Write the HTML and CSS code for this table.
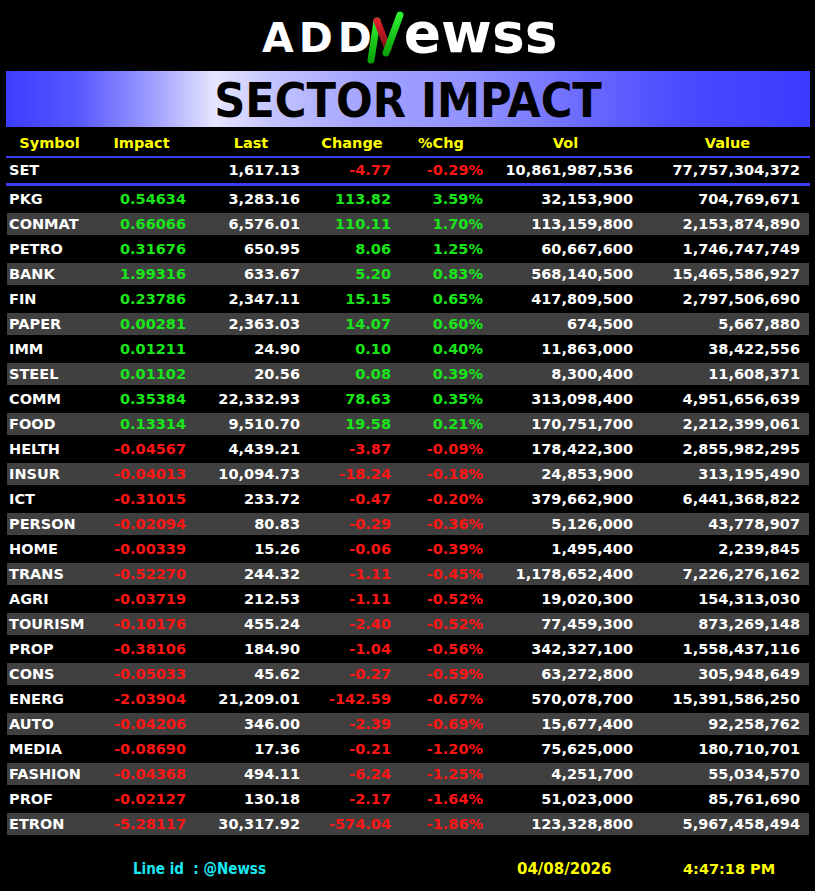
FILE: index.html
```html
<!DOCTYPE html>
<html lang="en">
<head>
<meta charset="utf-8">
<title>SECTOR IMPACT</title>
<link rel="stylesheet" href="styles.css">
</head>
<body>
<div class="page">
  <header class="logo">
    <span class="logo-caps">ADD</span><svg class="logo-n" viewBox="0 0 40 54" width="40" height="54" aria-label="N">
      <defs>
        <linearGradient id="gup" x1="0" y1="1" x2="0" y2="0">
          <stop offset="0" stop-color="#0aa40a"/>
          <stop offset="1" stop-color="#2ef02e"/>
        </linearGradient>
        <linearGradient id="rdn" x1="0" y1="0" x2="0" y2="1">
          <stop offset="0" stop-color="#e0202c"/>
          <stop offset="1" stop-color="#7c1018"/>
        </linearGradient>
      </defs>
      <line x1="6" y1="49" x2="12" y2="10" stroke="url(#gup)" stroke-width="7" stroke-linecap="round"/>
      <line x1="12" y1="10" x2="23" y2="38" stroke="url(#rdn)" stroke-width="7" stroke-linecap="round"/>
      <line x1="21" y1="42" x2="35" y2="4" stroke="url(#gup)" stroke-width="7" stroke-linecap="round"/>
    </svg><span class="logo-lower">ewss</span>
  </header>

  <div class="banner"><h1 class="title">SECTOR IMPACT</h1></div>

  <div class="board">
    <div class="row head">
      <span class="h-sym">Symbol</span><span class="h-imp">Impact</span><span class="h-last">Last</span><span class="h-chg">Change</span><span class="h-pct">%Chg</span><span class="h-vol">Vol</span><span class="h-val">Value</span>
    </div>
    <div class="rule thin"></div>
    <div class="row set">
      <span class="sym">SET</span><span></span><span>1,617.13</span><span class="dn">-4.77</span><span class="dn">-0.29%</span><span>10,861,987,536</span><span>77,757,304,372</span>
    </div>
    <div class="rule thick"></div>

    <div class="row"><span class="sym">PKG</span><span class="up">0.54634</span><span>3,283.16</span><span class="up">113.82</span><span class="up">3.59%</span><span>32,153,900</span><span>704,769,671</span></div>
    <div class="row alt"><span class="sym">CONMAT</span><span class="up">0.66066</span><span>6,576.01</span><span class="up">110.11</span><span class="up">1.70%</span><span>113,159,800</span><span>2,153,874,890</span></div>
    <div class="row"><span class="sym">PETRO</span><span class="up">0.31676</span><span>650.95</span><span class="up">8.06</span><span class="up">1.25%</span><span>60,667,600</span><span>1,746,747,749</span></div>
    <div class="row alt"><span class="sym">BANK</span><span class="up">1.99316</span><span>633.67</span><span class="up">5.20</span><span class="up">0.83%</span><span>568,140,500</span><span>15,465,586,927</span></div>
    <div class="row"><span class="sym">FIN</span><span class="up">0.23786</span><span>2,347.11</span><span class="up">15.15</span><span class="up">0.65%</span><span>417,809,500</span><span>2,797,506,690</span></div>
    <div class="row alt"><span class="sym">PAPER</span><span class="up">0.00281</span><span>2,363.03</span><span class="up">14.07</span><span class="up">0.60%</span><span>674,500</span><span>5,667,880</span></div>
    <div class="row"><span class="sym">IMM</span><span class="up">0.01211</span><span>24.90</span><span class="up">0.10</span><span class="up">0.40%</span><span>11,863,000</span><span>38,422,556</span></div>
    <div class="row alt"><span class="sym">STEEL</span><span class="up">0.01102</span><span>20.56</span><span class="up">0.08</span><span class="up">0.39%</span><span>8,300,400</span><span>11,608,371</span></div>
    <div class="row"><span class="sym">COMM</span><span class="up">0.35384</span><span>22,332.93</span><span class="up">78.63</span><span class="up">0.35%</span><span>313,098,400</span><span>4,951,656,639</span></div>
    <div class="row alt"><span class="sym">FOOD</span><span class="up">0.13314</span><span>9,510.70</span><span class="up">19.58</span><span class="up">0.21%</span><span>170,751,700</span><span>2,212,399,061</span></div>
    <div class="row"><span class="sym">HELTH</span><span class="dn">-0.04567</span><span>4,439.21</span><span class="dn">-3.87</span><span class="dn">-0.09%</span><span>178,422,300</span><span>2,855,982,295</span></div>
    <div class="row alt"><span class="sym">INSUR</span><span class="dn">-0.04013</span><span>10,094.73</span><span class="dn">-18.24</span><span class="dn">-0.18%</span><span>24,853,900</span><span>313,195,490</span></div>
    <div class="row"><span class="sym">ICT</span><span class="dn">-0.31015</span><span>233.72</span><span class="dn">-0.47</span><span class="dn">-0.20%</span><span>379,662,900</span><span>6,441,368,822</span></div>
    <div class="row alt"><span class="sym">PERSON</span><span class="dn">-0.02094</span><span>80.83</span><span class="dn">-0.29</span><span class="dn">-0.36%</span><span>5,126,000</span><span>43,778,907</span></div>
    <div class="row"><span class="sym">HOME</span><span class="dn">-0.00339</span><span>15.26</span><span class="dn">-0.06</span><span class="dn">-0.39%</span><span>1,495,400</span><span>2,239,845</span></div>
    <div class="row alt"><span class="sym">TRANS</span><span class="dn">-0.52270</span><span>244.32</span><span class="dn">-1.11</span><span class="dn">-0.45%</span><span>1,178,652,400</span><span>7,226,276,162</span></div>
    <div class="row"><span class="sym">AGRI</span><span class="dn">-0.03719</span><span>212.53</span><span class="dn">-1.11</span><span class="dn">-0.52%</span><span>19,020,300</span><span>154,313,030</span></div>
    <div class="row alt"><span class="sym">TOURISM</span><span class="dn">-0.10176</span><span>455.24</span><span class="dn">-2.40</span><span class="dn">-0.52%</span><span>77,459,300</span><span>873,269,148</span></div>
    <div class="row"><span class="sym">PROP</span><span class="dn">-0.38106</span><span>184.90</span><span class="dn">-1.04</span><span class="dn">-0.56%</span><span>342,327,100</span><span>1,558,437,116</span></div>
    <div class="row alt"><span class="sym">CONS</span><span class="dn">-0.05033</span><span>45.62</span><span class="dn">-0.27</span><span class="dn">-0.59%</span><span>63,272,800</span><span>305,948,649</span></div>
    <div class="row"><span class="sym">ENERG</span><span class="dn">-2.03904</span><span>21,209.01</span><span class="dn">-142.59</span><span class="dn">-0.67%</span><span>570,078,700</span><span>15,391,586,250</span></div>
    <div class="row alt"><span class="sym">AUTO</span><span class="dn">-0.04206</span><span>346.00</span><span class="dn">-2.39</span><span class="dn">-0.69%</span><span>15,677,400</span><span>92,258,762</span></div>
    <div class="row"><span class="sym">MEDIA</span><span class="dn">-0.08690</span><span>17.36</span><span class="dn">-0.21</span><span class="dn">-1.20%</span><span>75,625,000</span><span>180,710,701</span></div>
    <div class="row alt"><span class="sym">FASHION</span><span class="dn">-0.04368</span><span>494.11</span><span class="dn">-6.24</span><span class="dn">-1.25%</span><span>4,251,700</span><span>55,034,570</span></div>
    <div class="row"><span class="sym">PROF</span><span class="dn">-0.02127</span><span>130.18</span><span class="dn">-2.17</span><span class="dn">-1.64%</span><span>51,023,000</span><span>85,761,690</span></div>
    <div class="row alt"><span class="sym">ETRON</span><span class="dn">-5.28117</span><span>30,317.92</span><span class="dn">-574.04</span><span class="dn">-1.86%</span><span>123,328,800</span><span>5,967,458,494</span></div>
  </div>

  <footer class="foot">
    <span class="line-id">Line id &nbsp;: @Newss</span><span class="date">04/08/2026</span><span class="time">4:47:18 PM</span>
  </footer>
</div>
</body>
</html>
```

FILE: styles.css
```css
html, body {
  margin: 0;
  padding: 0;
  background: #000;
}

.page {
  width: 815px;
  height: 891px;
  background: #000;
  color: #fff;
  font-family: "DejaVu Sans", Verdana, sans-serif;
  font-weight: bold;
  overflow: hidden;
}

/* ---------- logo ---------- */
.logo {
  height: 71px;
  box-sizing: border-box;
  padding-left: 262px;
  display: flex;
  justify-content: flex-start;
  align-items: flex-start;
  color: #fff;
}

.logo-caps {
  margin-top: 18px;
  font-family: "DejaVu Sans", Verdana, sans-serif;
  font-weight: bold;
  font-size: 41px;
  line-height: 1;
  letter-spacing: 5px;
  margin-right: -12px;
}

.logo-n {
  display: block;
  margin-top: 11px;
  margin-right: -1px;
}

.logo-lower {
  margin-top: 6px;
  font-family: "DejaVu Sans", Verdana, sans-serif;
  font-weight: bold;
  font-size: 55px;
  line-height: 1;
}

/* ---------- banner ---------- */
.banner {
  margin: 0 5px 0 6px;
  height: 56px;
  background: linear-gradient(90deg,
    #3c3cff 0%,
    #5858ff 9%,
    #9c9cff 18%,
    #e6e6ff 26%,
    #c4c4ff 33%,
    #a2a2ff 45%,
    #9292ff 58%,
    #6a6aff 72%,
    #4a4aff 84%,
    #3b3bff 100%);
}

.title {
  margin: 0;
  padding-top: 3px;
  line-height: 53px;
  text-align: center;
  color: #000;
  font-family: "DejaVu Sans Condensed", "DejaVu Sans", sans-serif;
  font-stretch: condensed;
  font-weight: bold;
  font-size: 48px;
}

/* ---------- table ---------- */
.board {
  display: flex;
  flex-direction: column;
}

.row {
  display: grid;
  grid-template-columns: 103px 80px 114px 91px 92px 150px 172px;
  margin: 2px 6px 1px 7px;
  height: 22px;
  line-height: 22px;
  font-size: 14.5px;
  white-space: nowrap;
}

.row > span {
  text-align: right;
  padding-right: 4px;
}

.row > span:first-child {
  text-align: left;
  padding-left: 2px;
  padding-right: 0;
}

.row > span:last-child {
  padding-right: 9px;
}

.row.alt {
  background: #404040;
}

.up { color: #19e619; }
.dn { color: #ff1414; }

/* header */
.row.head {
  margin-top: 4px;
  margin-bottom: 0;
  height: 25px;
  line-height: 25px;
  color: #ffff00;
}

.row.head > span {
  text-align: center;
  padding: 0;
}

.row.head > .h-sym { padding-right: 18px; }
.row.head > .h-imp { padding-right: 17px; }
.row.head > .h-last { padding-left: 8px; }
.row.head > .h-chg { padding-left: 5px; }
.row.head > .h-pct { padding-left: 0; }
.row.head > .h-vol { padding-left: 7px; }
.row.head > .h-val { padding-left: 9px; }

.row.set {
  margin-top: 0;
  margin-bottom: 0;
  height: 25px;
  line-height: 24px;
}

.rule {
  margin: 0 5px 0 6px;
  background: #3c3cf4;
}

.rule.thin { height: 2px; }
.rule.thick { height: 3px; }

/* ---------- footer ---------- */
.foot {
  display: flex;
  margin-top: 23px;
  padding-left: 133px;
  height: 20px;
  line-height: 20px;
  font-weight: bold;
  white-space: nowrap;
}

.line-id {
  width: 384px;
  color: #1ae8f2;
  font-family: "DejaVu Sans Condensed", "DejaVu Sans", sans-serif;
  font-stretch: condensed;
  font-size: 15px;
}

.date {
  width: 166px;
  color: #ffff00;
  font-size: 15px;
}

.time {
  color: #ffff00;
  font-size: 14.5px;
}
```
